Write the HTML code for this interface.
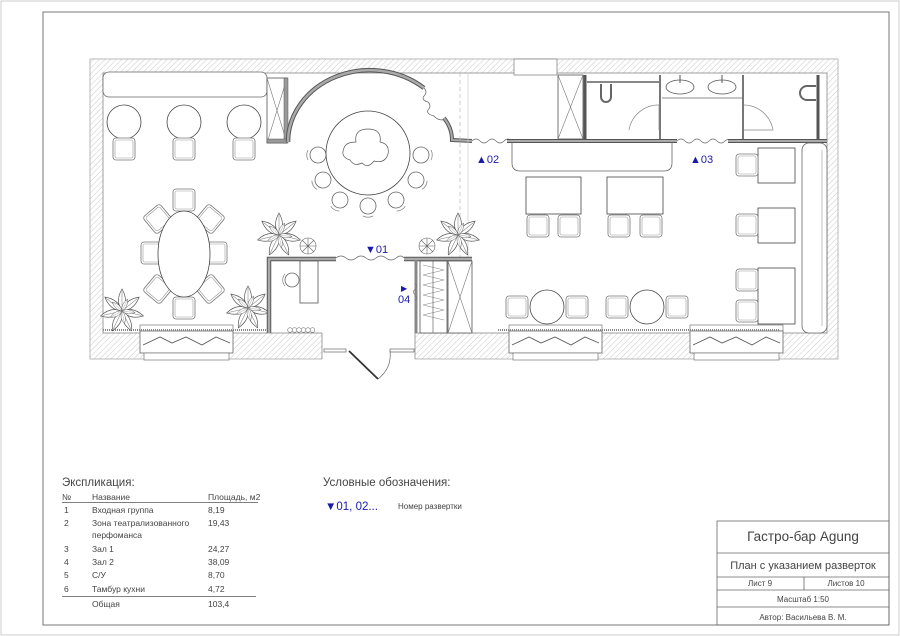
<!DOCTYPE html>
<html><head><meta charset="utf-8"><style>
html,body{margin:0;padding:0;background:#fff;}
svg{display:block}
text{font-family:"Liberation Sans","DejaVu Sans",sans-serif;fill:#444}
</style></head><body>
<svg width="900" height="636" viewBox="0 0 900 636" xmlns="http://www.w3.org/2000/svg">
<defs>
<pattern id="h" width="4" height="4" patternUnits="userSpaceOnUse" patternTransform="rotate(45)">
<rect width="4" height="4" fill="#fff"/><line x1="0" y1="0" x2="0" y2="4" stroke="#bbb" stroke-width="0.8"/>
</pattern>
<g id="ch"><rect x="-11" y="-11" width="22" height="22" rx="3" fill="#fff" stroke="#777" stroke-width="0.8"/><rect x="-9" y="-9" width="18" height="18" rx="2" fill="none" stroke="#999" stroke-width="0.6"/></g>
<g id="sc"><path d="M-10,-5 A11,11 0 0 0 -10,5" fill="none" stroke="#888" stroke-width="0.8"/><circle r="8" fill="#fff" stroke="#666" stroke-width="0.8"/></g>
<g id="pet"><path d="M0,0 Q-7,-10 0,-22 Q7,-10 0,0Z" fill="#fff" stroke="#555" stroke-width="0.7"/><path d="M0,0 L0,-20" stroke="#777" stroke-width="0.5"/></g>
<g id="pl">
<use href="#pet" transform="rotate(0)"/><use href="#pet" transform="rotate(51)"/><use href="#pet" transform="rotate(103)"/><use href="#pet" transform="rotate(154)"/><use href="#pet" transform="rotate(206)"/><use href="#pet" transform="rotate(257)"/><use href="#pet" transform="rotate(309)"/>
<g transform="scale(0.6) rotate(25)"><use href="#pet" transform="rotate(0)"/><use href="#pet" transform="rotate(72)"/><use href="#pet" transform="rotate(144)"/><use href="#pet" transform="rotate(216)"/><use href="#pet" transform="rotate(288)"/></g>
</g>
<g id="sp" fill="#fff" stroke="#666" stroke-width="0.6"><circle r="8"/><path d="M0,-8 L0,8 M-8,0 L8,0 M-6,-6 L6,6 M6,-6 L-6,6"/></g>
<g id="win"><rect x="0" y="0" width="93" height="6" fill="#fff" stroke="#777" stroke-width="0.7"/><rect x="0" y="6" width="93" height="22" fill="#fff" stroke="#666" stroke-width="0.8"/><path d="M3,20 L20,12 L32,18 L46,12 L62,20 L76,12 L90,18" fill="none" stroke="#555" stroke-width="0.8"/><rect x="4" y="28" width="85" height="7" fill="#fff" stroke="#777" stroke-width="0.7"/></g>
</defs>

<rect x="1" y="1" width="898" height="634" fill="none" stroke="#ccc"/>
<rect x="43" y="12" width="846" height="613" fill="none" stroke="#777" stroke-width="1"/>

<rect x="90" y="59" width="748" height="300" fill="url(#h)" stroke="#aaa" stroke-width="0.8"/>
<rect x="103" y="73" width="724" height="260" fill="#fff" stroke="#888" stroke-width="0.8"/>
<rect x="322" y="332" width="93" height="28" fill="#fff"/>
<line x1="322" y1="333" x2="322" y2="359" stroke="#888" stroke-width="0.8"/>
<line x1="415" y1="333" x2="415" y2="359" stroke="#888" stroke-width="0.8"/>
<rect x="324" y="349" width="22" height="3" fill="#fff" stroke="#666" stroke-width="0.7"/>
<rect x="390" y="349" width="24" height="3" fill="#fff" stroke="#666" stroke-width="0.7"/>
<line x1="349" y1="351" x2="378" y2="379" stroke="#333" stroke-width="1.8"/>
<path d="M378,379 Q392,368 390,351" fill="none" stroke="#666" stroke-width="0.7"/>
<use href="#win" x="140" y="325"/>
<use href="#win" x="509" y="325"/>
<use href="#win" x="690" y="325"/>
<line x1="103" y1="330" x2="267" y2="330" stroke="#888" stroke-width="2" stroke-dasharray="1 1"/>
<line x1="498" y1="330" x2="780" y2="330" stroke="#888" stroke-width="2" stroke-dasharray="1 1"/>

<rect x="103" y="72" width="164" height="25" rx="6" fill="#fff" stroke="#666" stroke-width="0.8"/>
<circle cx="124" cy="122" r="17" fill="#fff" stroke="#444" stroke-width="0.8"/>
<circle cx="184" cy="122" r="17" fill="#fff" stroke="#444" stroke-width="0.8"/>
<circle cx="244" cy="122" r="17" fill="#fff" stroke="#444" stroke-width="0.8"/>
<use href="#ch" x="124" y="149"/><use href="#ch" x="184" y="149"/><use href="#ch" x="244" y="149"/>
<rect x="267" y="78" width="20" height="65" fill="#fff" stroke="#555" stroke-width="0.8"/>
<path d="M267,78 L287,143 M287,78 L267,143" stroke="#777" stroke-width="0.6"/>
<rect x="284" y="78" width="4" height="65" fill="#999" stroke="#555" stroke-width="0.5"/>
<rect x="267" y="139" width="20" height="4" fill="#999" stroke="#555" stroke-width="0.5"/>
<path d="M288,142 A82,72 0 0 1 424,88" fill="none" stroke="#555" stroke-width="4.5"/>
<path d="M288,142 A82,72 0 0 1 424,88" fill="none" stroke="#aaa" stroke-width="2.5"/>
<path d="M424,88 q4,4 0,8 q-3,4 4,6 q4,4 0,8 q-2,4 6,6 q3,4 9,4" fill="none" stroke="#666" stroke-width="0.7"/>
<path d="M444,118 Q452,128 452,140 L472,141" fill="none" stroke="#555" stroke-width="4"/>
<path d="M444,118 Q452,128 452,140 L472,141" fill="none" stroke="#aaa" stroke-width="2"/>
<line x1="460" y1="73" x2="460" y2="257" stroke="#bbb" stroke-width="0.7" stroke-dasharray="4 3"/>
<line x1="468" y1="73" x2="468" y2="257" stroke="#ccc" stroke-width="0.7"/>
<use href="#sc" x="318" y="155"/>
<use href="#sc" x="421" y="155" transform="rotate(180 421 155)"/>
<use href="#sc" x="323" y="180" transform="rotate(-30 323 180)"/>
<use href="#sc" x="416" y="180" transform="rotate(210 416 180)"/>
<use href="#sc" x="340" y="200" transform="rotate(-60 340 200)"/>
<use href="#sc" x="396" y="200" transform="rotate(240 396 200)"/>
<use href="#sc" x="368" y="206" transform="rotate(-90 368 206)"/>
<circle cx="368" cy="153" r="42" fill="#fff" stroke="#444" stroke-width="0.8"/>
<path d="M356,142 q-2,-13 12,-13 q14,0 12,13 q10,2 8,12 q-3,10 -14,7 q-6,8 -12,2 q-8,4 -12,-3 q-10,-3 -6,-12 q2,-6 12,-6z" fill="#fff" stroke="#555" stroke-width="0.7"/>
<use href="#ch" x="184" y="200"/><use href="#ch" x="184" y="308"/>
<use href="#ch" x="152" y="253"/><use href="#ch" x="216" y="253"/>
<use href="#ch" x="158" y="219" transform="rotate(-40 158 219)"/>
<use href="#ch" x="210" y="219" transform="rotate(40 210 219)"/>
<use href="#ch" x="158" y="289" transform="rotate(40 158 289)"/>
<use href="#ch" x="210" y="289" transform="rotate(-40 210 289)"/>
<ellipse cx="184" cy="254" rx="26" ry="43" fill="#fff" stroke="#444" stroke-width="0.8"/>
<use href="#pl" x="122" y="311"/><use href="#pl" x="248" y="308"/>
<use href="#pl" x="279" y="235"/><use href="#pl" x="458" y="235"/>
<use href="#sp" x="308" y="246"/><use href="#sp" x="427" y="246"/>

<path d="M269,333 L269,259 L336,259" fill="none" stroke="#555" stroke-width="4.5"/>
<path d="M269,333 L269,259 L336,259" fill="none" stroke="#aaa" stroke-width="2.5"/>
<path d="M336,258 q5,-4 10,0 q5,4 10,0 q5,-4 10,0 q5,4 10,0 q5,-4 10,0 q5,4 10,0 q5,-4 8,0" fill="none" stroke="#666" stroke-width="0.7"/>
<path d="M404,259 L472,259" stroke="#555" stroke-width="4.5"/>
<path d="M404,259 L472,259" stroke="#aaa" stroke-width="2.5"/>
<path d="M416,260 L416,333" stroke="#888" stroke-width="3"/>
<rect x="300" y="261" width="18" height="42" fill="#fff" stroke="#555" stroke-width="0.8"/>
<circle cx="292" cy="280" r="7" fill="#fff" stroke="#666" stroke-width="0.8"/>
<path d="M285,274 A9,9 0 0 0 285,286" fill="none" stroke="#888" stroke-width="0.7"/>
<g fill="#fff" stroke="#777" stroke-width="0.6"><circle cx="290" cy="330" r="2.3"/><circle cx="294.5" cy="330" r="2.3"/><circle cx="299" cy="330" r="2.3"/><circle cx="303.5" cy="330" r="2.3"/><circle cx="308" cy="330" r="2.3"/><circle cx="312.5" cy="330" r="2.3"/></g>
<rect x="420" y="261" width="27" height="72" fill="#fff" stroke="#555" stroke-width="0.8"/>
<path d="M423,265 L444,270 L423,275 L444,280 L423,285 L444,290 L423,295 L444,300 L423,305 L444,310 L423,315 L444,320" fill="none" stroke="#888" stroke-width="0.6"/>
<line x1="433" y1="261" x2="433" y2="333" stroke="#666" stroke-width="0.7"/>
<rect x="448" y="261" width="24" height="72" fill="#fff" stroke="#555" stroke-width="0.8"/>
<path d="M448,261 L472,333 M472,261 L448,333" stroke="#777" stroke-width="0.6"/>
<path d="M415,283 q3,3 0,6 q-3,3 0,6 q3,3 0,6" fill="none" stroke="#777" stroke-width="0.6"/>

<rect x="514" y="59" width="43" height="16" fill="#fff" stroke="#777" stroke-width="0.7"/>
<rect x="558" y="75" width="25" height="64" fill="#fff" stroke="#555" stroke-width="0.8"/>
<path d="M558,75 L583,139 M583,75 L558,139" stroke="#777" stroke-width="0.6"/>
<path d="M585,75 L585,141" stroke="#555" stroke-width="3"/>
<path d="M587,82 L659,82" stroke="#888" stroke-width="2"/>
<path d="M660,75 L660,141" stroke="#777" stroke-width="2"/>
<path d="M601,84 L601,97 A5,5 0 0 0 611,97 L611,84" fill="none" stroke="#666" stroke-width="2"/>
<path d="M629,130 A30,30 0 0 1 659,105 L659,130" fill="none" stroke="#888" stroke-width="0.7"/>
<path d="M662,98 L742,98" stroke="#666" stroke-width="0.8"/>
<ellipse cx="680" cy="87" rx="14" ry="7" fill="#fff" stroke="#555" stroke-width="0.8"/>
<ellipse cx="722" cy="87" rx="14" ry="7" fill="#fff" stroke="#555" stroke-width="0.8"/>
<path d="M680,75 L680,83 M722,75 L722,83" stroke="#555" stroke-width="1"/>
<path d="M743,75 L743,141" stroke="#777" stroke-width="2"/>
<path d="M743,105 A30,30 0 0 1 773,130 L743,130" fill="none" stroke="#888" stroke-width="0.7"/>
<path d="M818,75 L818,141" stroke="#555" stroke-width="3"/>
<path d="M816,86 L807,86 A5,5 0 0 0 807,100 L816,100" fill="none" stroke="#666" stroke-width="2"/>
<path d="M472,141 q4,-4 8,0 q4,4 8,0 q4,-4 8,0 q4,4 8,0 q4,-4 7,0" fill="none" stroke="#666" stroke-width="0.7"/>
<path d="M507,141 L677,141" stroke="#555" stroke-width="4"/>
<path d="M507,141 L677,141" stroke="#aaa" stroke-width="2"/>
<path d="M677,141 q4,-4 8,0 q4,4 8,0 q4,-4 8,0 q4,4 8,0 q4,-4 8,0 q4,4 8,0 q3,-3 6,0" fill="none" stroke="#666" stroke-width="0.7"/>
<path d="M728,141 L827,141" stroke="#555" stroke-width="4"/>
<path d="M728,141 L827,141" stroke="#aaa" stroke-width="2"/>
<path d="M512,143 L512,163 Q512,171 520,171 L664,171 Q672,171 672,163 L672,143" fill="#fff" stroke="#666" stroke-width="0.8"/>
<rect x="526" y="177" width="55" height="37" fill="#fff" stroke="#444" stroke-width="0.8"/>
<rect x="607" y="177" width="56" height="37" fill="#fff" stroke="#444" stroke-width="0.8"/>
<use href="#ch" x="538" y="226"/><use href="#ch" x="569" y="226"/>
<use href="#ch" x="619" y="226"/><use href="#ch" x="651" y="226"/>
<rect x="758" y="148" width="37" height="35" fill="#fff" stroke="#444" stroke-width="0.8"/>
<rect x="758" y="208" width="37" height="35" fill="#fff" stroke="#444" stroke-width="0.8"/>
<rect x="758" y="268" width="37" height="56" fill="#fff" stroke="#444" stroke-width="0.8"/>
<use href="#ch" x="747" y="165"/><use href="#ch" x="747" y="225"/>
<use href="#ch" x="747" y="280"/><use href="#ch" x="747" y="311"/>
<rect x="802" y="143" width="25" height="190" rx="7" fill="#fff" stroke="#666" stroke-width="0.8"/>
<line x1="822" y1="150" x2="822" y2="326" stroke="#999" stroke-width="0.6"/>
<use href="#ch" x="517" y="307"/><use href="#ch" x="577" y="307"/>
<use href="#ch" x="617" y="307"/><use href="#ch" x="677" y="307"/>
<circle cx="547" cy="307" r="17" fill="#fff" stroke="#444" stroke-width="0.8"/>
<circle cx="647" cy="307" r="17" fill="#fff" stroke="#444" stroke-width="0.8"/>

<g style="font-size:11px">
<text x="365" y="253" style="fill:#1a1aa8">▼01</text>
<text x="476" y="163" style="fill:#1a1aa8">▲02</text>
<text x="690" y="163" style="fill:#1a1aa8">▲03</text>
<text x="401" y="291" style="fill:#1a1aa8;font-size:8px">▶</text>
<text x="398" y="303" style="fill:#1a1aa8">04</text>
</g>

<text x="62" y="486" style="font-size:11.5px">Экспликация:</text>
<g style="font-size:8.5px">
<text x="62" y="500">№</text><text x="92" y="500">Название</text><text x="208" y="500">Площадь, м2</text>
<line x1="62" y1="502.5" x2="258" y2="502.5" stroke="#555" stroke-width="0.8"/>
<text x="64" y="513">1</text><text x="92" y="513">Входная группа</text><text x="208" y="513">8,19</text>
<text x="64" y="526">2</text><text x="92" y="526">Зона театрализованного</text><text x="208" y="526">19,43</text>
<text x="92" y="538">перфоманса</text>
<text x="64" y="552">3</text><text x="92" y="552">Зал 1</text><text x="208" y="552">24,27</text>
<text x="64" y="565">4</text><text x="92" y="565">Зал 2</text><text x="208" y="565">38,09</text>
<text x="64" y="578">5</text><text x="92" y="578">С/У</text><text x="208" y="578">8,70</text>
<text x="64" y="592">6</text><text x="92" y="592">Тамбур кухни</text><text x="208" y="592">4,72</text>
<line x1="62" y1="596.5" x2="256" y2="596.5" stroke="#555" stroke-width="0.8"/>
<text x="92" y="607">Общая</text><text x="208" y="607">103,4</text>
</g>
<text x="323" y="486" style="font-size:11.5px">Условные обозначения:</text>
<text x="325" y="510" style="font-size:11.5px;fill:#1a1aa8">▼01, 02...</text>
<text x="398" y="509" style="font-size:8px">Номер развертки</text>

<g fill="none" stroke="#666" stroke-width="0.8">
<rect x="717" y="521" width="172" height="104"/>
<line x1="717" y1="553" x2="889" y2="553"/>
<line x1="717" y1="577" x2="889" y2="577"/>
<line x1="717" y1="590" x2="889" y2="590"/>
<line x1="717" y1="607" x2="889" y2="607"/>
<line x1="804" y1="577" x2="804" y2="590"/>
</g>
<text x="803" y="541" text-anchor="middle" style="font-size:13.5px">Гастро-бар Agung</text>
<text x="803" y="569" text-anchor="middle" style="font-size:11px">План с указанием разверток</text>
<text x="760" y="586" text-anchor="middle" style="font-size:8px">Лист 9</text>
<text x="846" y="586" text-anchor="middle" style="font-size:8px">Листов 10</text>
<text x="803" y="602" text-anchor="middle" style="font-size:8px">Масштаб 1:50</text>
<text x="803" y="620" text-anchor="middle" style="font-size:8px">Автор: Васильева В. М.</text>
</svg>
</body></html>
